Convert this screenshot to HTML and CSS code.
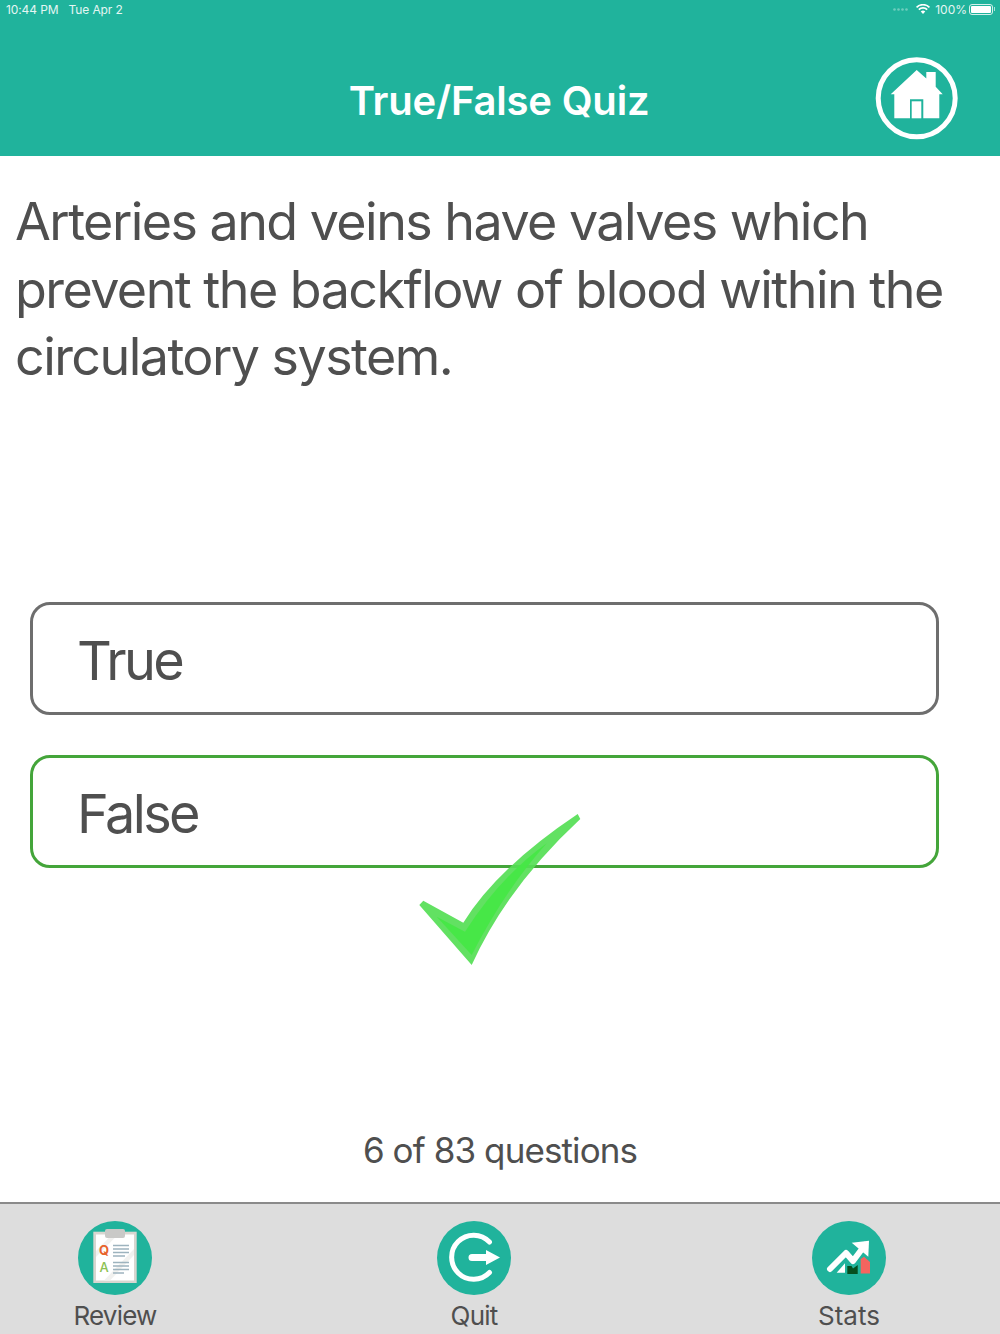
FILE: index.html
```html
<!DOCTYPE html>
<html lang="en">
<head>
  <meta charset="UTF-8" />
  <title>True/False Quiz</title>
  <link rel="stylesheet" href="styles.css">
</head>
<body>
  <header class="header">
    <div class="status-bar">
      <div class="status-left"><span>10:44 PM</span><span>Tue Apr 2</span></div>
      <div class="status-right">
        <svg class="signal" width="17" height="3" viewBox="0 0 17 3"><g fill="#fff" opacity="0.35"><circle cx="1.5" cy="1.5" r="1.3"/><circle cx="5.5" cy="1.5" r="1.3"/><circle cx="9.5" cy="1.5" r="1.3"/><circle cx="13.5" cy="1.5" r="1.3"/></g></svg>
        <svg class="wifi" width="14" height="10" viewBox="0 0 14 10"><path d="M7 10 4.700 7.500a3.300 3.300 0 0 1 4.600 0zM3.500 6.300 2.200 5a6.900 6.900 0 0 1 9.600 0l-1.300 1.300a5 5 0 0 0-7 0zM1.100 3.900 0 2.700a10 10 0 0 1 14 0l-1.100 1.200a8.400 8.400 0 0 0-11.800 0z" fill="#fff"/></svg>
        <span>100%</span>
        <div class="battery"><div class="battery-fill"></div></div>
        <div class="battery-cap"></div>
      </div>
    </div>
    <div class="title-row">
      <h1 class="title">True/False Quiz</h1>
      <svg class="home" width="84" height="84" viewBox="0 0 84 84">
        <circle cx="41.700" cy="41.300" r="38.500" fill="none" stroke="#fff" stroke-width="5"/>
        <path fill="#fff" fill-rule="evenodd" d="M41.700 13 51.300 21.500V15H60.700V29.800L67.700 37.300H64.300V61.300H19.300V37.300H15.700ZM35 42.300V61.300H48.300V42.300Z"/>
        <rect x="36.700" y="44.300" width="9.600" height="17" fill="#fff"/>
      </svg>
    </div>
  </header>

  <main class="quiz">
    <p class="question">Arteries and veins have valves which prevent the backflow of blood within the circulatory system.</p>
    <div class="options">
      <div class="option">True</div>
      <div class="option correct">False</div>
    </div>
    <svg class="check" width="180" height="170" viewBox="0 0 180 170">
      <path fill="#55de55" opacity="0.92" d="M9.300 100 13.300 95.700 53.300 117.700Q87 63 167.700 9L170.300 14Q97 82 61.700 160Z"/>
      <path fill="#45e845" opacity="0.9" d="M26.700 111.700 55 126.700Q90 72 136.700 38.300 95 85 61.700 150Z"/>
    </svg>
    <div class="counter">6 of 83 questions</div>
  </main>

  <nav class="tabbar">
    <div class="tab">
      <svg class="tab-icon" width="74" height="74" viewBox="0 0 74 74">
        <circle cx="37" cy="37" r="37" fill="#20b39c"/>
        <rect x="15.300" y="10.700" width="43.400" height="51.300" fill="#d8d6d0"/>
        <rect x="18" y="13.500" width="38" height="46" fill="#fff"/>
        <path d="M18 30 34 13.500H40L18 36ZM26 59.500 56 28V34L32 59.500Z" fill="#f1f1ef"/>
        <rect x="27" y="8" width="20" height="9" rx="2" fill="#c9c9c7"/>
        <g fill="none" stroke="#9db3be" stroke-width="1.500">
          <path d="M35 24.500H51M35 28H51M35 31.500H51M35 35H47"/>
          <path d="M35 41.500H51M35 45H51M35 48.500H51M35 52H46"/>
        </g>
        <text class="icon-q" x="26" y="34">Q</text>
        <text class="icon-a" x="26" y="51">A</text>
      </svg>
      <span class="tab-label">Review</span>
    </div>
    <div class="tab">
      <svg class="tab-icon" width="74" height="74" viewBox="0 0 74 74">
        <circle cx="37" cy="37" r="37" fill="#20b39c"/>
        <path d="M52.500 21A22 22 0 1 0 52.500 51.500" fill="none" stroke="#fff" stroke-width="5" stroke-linecap="round"/>
        <path d="M35 33H49V29L63 36.500 49 44V40H35A3.500 3.500 0 0 1 35 33Z" fill="#fff"/>
      </svg>
      <span class="tab-label">Quit</span>
    </div>
    <div class="tab">
      <svg class="tab-icon" width="74" height="74" viewBox="0 0 74 74">
        <circle cx="37" cy="37" r="37" fill="#20b39c"/>
        <path d="M35.300 45H39.500L41 47.500 45.700 44V53H35.300Z" fill="#064f1f"/>
        <path d="M24.700 51.700 33 42.300V51.700Z" fill="#fff"/>
        <path d="M48.700 38 52 35.700 58 41V52.500H48.700Z" fill="#f4645f"/>
        <path d="M18 48 34 32 41 40 53 24" fill="none" stroke="#fff" stroke-width="6" stroke-linecap="round" stroke-linejoin="round"/>
        <path d="M39.700 21.700 57 19.700 56.300 35.700Z" fill="#fff"/>
      </svg>
      <span class="tab-label wide">Stats</span>
    </div>
  </nav>
</body>
</html>
```

FILE: styles.css
```css
html, body {
  margin: 0;
  height: 100%;
}
body {
  font-family: Inter, "Liberation Sans", sans-serif;
  background-color: #fff;
  color: #4f4f4f;
  width: 1000px;
  height: 1334px;
  display: flex;
  flex-direction: column;
  overflow: hidden;
}
.header {
  background-color: #20b39c;
  color: #fff;
  height: 156px;
  flex: none;
}
.status-bar {
  height: 18px;
  padding: 0 5px 0 6px;
  display: flex;
  justify-content: space-between;
  align-items: center;
  font-size: 12px;
  color: #e4f6f3;
}
.status-left {
  display: flex;
  gap: 10px;
  letter-spacing: -0.1px;
}
.status-right {
  display: flex;
  align-items: center;
  gap: 5px;
}
.signal {
  margin-right: 1px;
}
.battery {
  width: 24px;
  height: 11px;
  border: 1px solid #d5f1ec;
  border-radius: 3px;
  padding: 1px;
  box-sizing: border-box;
  margin: 0 -4px 0 -3px;
}
.battery-fill {
  background-color: #fff;
  height: 100%;
  border-radius: 1px;
}
.battery-cap {
  width: 1px;
  height: 4px;
  background-color: #a8e0d6;
}
.title-row {
  display: flex;
  justify-content: center;
  align-items: center;
  position: relative;
  box-sizing: border-box;
  height: 138px;
  padding-top: 26px;
}
.title {
  margin: 0;
  font-size: 40px;
  font-weight: 600;
  letter-spacing: -0.2px;
  position: relative;
  left: -1px;
}
.home {
  position: absolute;
  top: 39px;
  left: 875px;
}
.quiz {
  flex: 1;
  position: relative;
  display: flex;
  flex-direction: column;
}
.question {
  margin: 0;
  padding: 32px 30px 0 15px;
  font-size: 52px;
  line-height: 67.500px;
  font-weight: 400;
  letter-spacing: -1.55px;
  height: 414px;
  box-sizing: border-box;
  flex: none;
}
.options {
  display: flex;
  flex-direction: column;
  gap: 40px;
  margin: 32px 61px 0 30px;
}
.option {
  height: 113px;
  box-sizing: border-box;
  border: 3px solid #6e6e6e;
  border-radius: 20px;
  padding: 3px 44px 0;
  display: flex;
  align-items: center;
  font-size: 54px;
  letter-spacing: -2.6px;
}
.option.correct {
  border-color: #44a53a;
}
.check {
  position: absolute;
  left: 410px;
  top: 649px;
}
.counter {
  margin-top: auto;
  padding-bottom: 31px;
  text-align: center;
  font-size: 35px;
  letter-spacing: -0.9px;
}
.tabbar {
  flex: none;
  height: 132px;
  box-sizing: border-box;
  background-color: #dddddd;
  border-top: 2px solid #8a8a8a;
  padding: 17px 18px 0 0;
  display: grid;
  grid-template-columns: 230px 488px 262px;
}
.tab {
  display: flex;
  flex-direction: column;
  align-items: center;
  gap: 2px;
}
.tab-icon {
  display: block;
}
.tab-label {
  font-size: 26px;
  line-height: 38px;
  letter-spacing: -0.8px;
}
.tab-label.wide {
  letter-spacing: 0;
}
.icon-q, .icon-a {
  font-size: 13px;
  font-weight: 700;
  text-anchor: middle;
}
.icon-q {
  fill: #e8632c;
}
.icon-a {
  fill: #8cc152;
  font-weight: 500;
}
```
